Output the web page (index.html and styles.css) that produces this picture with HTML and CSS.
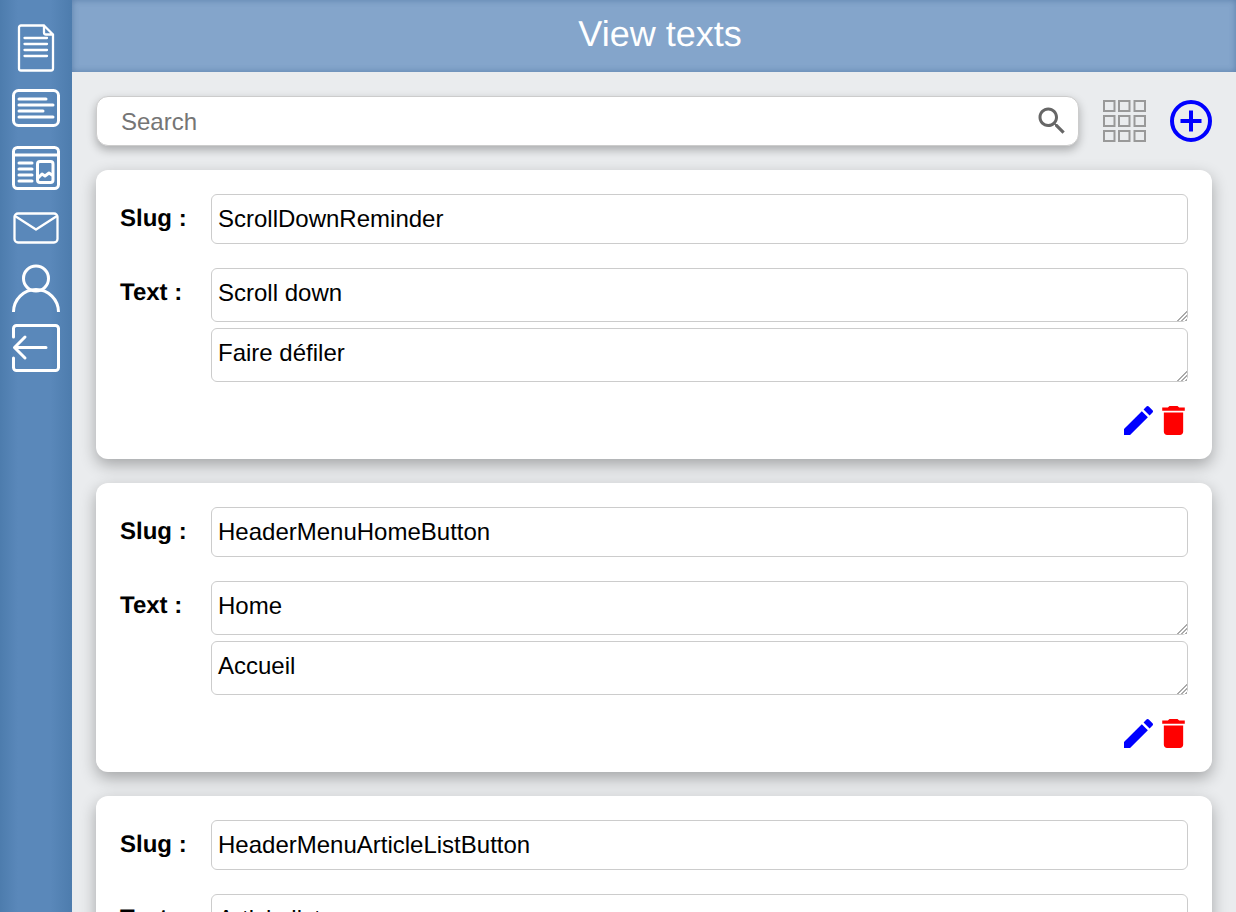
FILE: index.html
```html
<!DOCTYPE html>
<html lang="en">
<head>
	<meta charset="UTF-8">
	<title>View texts</title>
	<link rel="stylesheet" href="styles.css">
</head>
<body>
	<nav class="sidebar">
		<svg class="nav-icon thin" viewBox="0 0 48 48"><path d="M9 1.5H32L41 10.5V44.5a2 2 0 0 1-2 2H9a2 2 0 0 1-2-2V3.5a2 2 0 0 1 2-2zM32 1.5V8.5a2 2 0 0 0 2 2H41M12.5 14H35M12.5 20H35M12.5 26H35M12.5 32H35"/></svg>
		<svg class="nav-icon" viewBox="0 0 48 48"><rect x="1.5" y="6.5" width="45" height="35" rx="5"/><path d="M7 15H34M7 21H41M7 27H31M7 33H41"/></svg>
		<svg class="nav-icon" viewBox="0 0 48 48"><rect x="1.5" y="3.5" width="45" height="41" rx="4"/><path d="M1.5 11H46.5M7 19H20M7 25H20M7 31H20M7 37H20"/><rect x="25.5" y="17.5" width="15.5" height="21" rx="2.5"/><path d="M26 34L30 30L33 32L37 29L40 31"/></svg>
		<svg class="nav-icon thin" viewBox="0 0 48 48"><rect x="2.5" y="9.5" width="43" height="29" rx="3.5"/><path d="M3 12L24 25.5L45 12"/></svg>
		<svg class="nav-icon" viewBox="0 0 48 48"><circle cx="24" cy="14.5" r="12.5"/><path d="M1.5 48A22.5 22.5 0 0 1 46.5 48"/></svg>
		<svg class="nav-icon" viewBox="0 0 48 48"><path d="M1.5 13V4.5a3 3 0 0 1 3-3H43.5a3 3 0 0 1 3 3V43.5a3 3 0 0 1-3 3H4.5a3 3 0 0 1-3-3V34M2.5 23.5H34M13 13L2.5 23.5L13 34"/></svg>
	</nav>
	<div class="page">
		<header class="top-bar">
			<h1>View texts</h1>
		</header>
		<main class="content">
			<div class="toolbar">
				<div class="search">
					<input class="search-input" type="text" placeholder="Search">
					<svg class="search-icon" viewBox="0 0 24 24"><path d="M15.5 14h-.79l-.28-.27C15.41 12.59 16 11.11 16 9.5 16 5.91 13.09 3 9.5 3S3 5.91 3 9.5 5.91 16 9.5 16c1.61 0 3.09-.59 4.23-1.57l.27.28v.79l5 4.99L20.49 19l-4.99-5zm-6 0C7.01 14 5 11.99 5 9.5S7.01 5 9.5 5 14 7.01 14 9.5 11.99 14 9.5 14z"/></svg>
				</div>
				<svg class="grid-icon" viewBox="0 0 43 42">
					<rect x="1" y="1" width="10.5" height="10"/><rect x="16" y="1" width="10.5" height="10"/><rect x="31.5" y="1" width="10.5" height="10"/>
					<rect x="1" y="16" width="10.5" height="10"/><rect x="16" y="16" width="10.5" height="10"/><rect x="31.5" y="16" width="10.5" height="10"/>
					<rect x="1" y="31" width="10.5" height="10"/><rect x="16" y="31" width="10.5" height="10"/><rect x="31.5" y="31" width="10.5" height="10"/>
				</svg>
				<svg class="add-icon" viewBox="0 0 42 42"><circle cx="21" cy="21" r="19"/><path d="M10.5 21H31.5M21 10.5V31.5"/></svg>
			</div>

			<section class="card">
				<div class="row">
					<label class="label">Slug :</label>
					<div class="fields"><input class="field" type="text" value="ScrollDownReminder"></div>
				</div>
				<div class="row">
					<label class="label">Text :</label>
					<div class="fields">
						<textarea class="field area">Scroll down</textarea>
						<textarea class="field area">Faire défiler</textarea>
					</div>
				</div>
				<div class="actions">
					<svg class="edit-icon" viewBox="3 3 18 18"><path d="M3 17.25V21h3.75L17.81 9.94l-3.75-3.75L3 17.25zM20.71 7.04c.39-.39.39-1.02 0-1.41l-2.34-2.34c-.39-.39-1.02-.39-1.41 0l-1.83 1.83 3.75 3.75 1.83-1.83z"/></svg>
					<svg class="delete-icon" viewBox="5 3 14 18"><path d="M6 19c0 1.1.9 2 2 2h8c1.1 0 2-.9 2-2V7H6v12zM19 4h-3.5l-1-1h-5l-1 1H5v2h14V4z"/></svg>
				</div>
			</section>

			<section class="card">
				<div class="row">
					<label class="label">Slug :</label>
					<div class="fields"><input class="field" type="text" value="HeaderMenuHomeButton"></div>
				</div>
				<div class="row">
					<label class="label">Text :</label>
					<div class="fields">
						<textarea class="field area">Home</textarea>
						<textarea class="field area">Accueil</textarea>
					</div>
				</div>
				<div class="actions">
					<svg class="edit-icon" viewBox="3 3 18 18"><path d="M3 17.25V21h3.75L17.81 9.94l-3.75-3.75L3 17.25zM20.71 7.04c.39-.39.39-1.02 0-1.41l-2.34-2.34c-.39-.39-1.02-.39-1.41 0l-1.83 1.83 3.75 3.75 1.83-1.83z"/></svg>
					<svg class="delete-icon" viewBox="5 3 14 18"><path d="M6 19c0 1.1.9 2 2 2h8c1.1 0 2-.9 2-2V7H6v12zM19 4h-3.5l-1-1h-5l-1 1H5v2h14V4z"/></svg>
				</div>
			</section>

			<section class="card">
				<div class="row">
					<label class="label">Slug :</label>
					<div class="fields"><input class="field" type="text" value="HeaderMenuArticleListButton"></div>
				</div>
				<div class="row">
					<label class="label">Text :</label>
					<div class="fields">
						<textarea class="field area">Article list</textarea>
						<textarea class="field area">Liste des articles</textarea>
					</div>
				</div>
			</section>
		</main>
	</div>
</body>
</html>
```

FILE: styles.css
```css
html, body{
	height: 100%;
	margin: 0;
	overflow: hidden;
}
body{
	display: flex;
	background-color: #eaecee;
	font-family: "Liberation Sans", Arial, sans-serif;
	font-size: 24px;
	color: #000;
	text-rendering: geometricPrecision;
}
.sidebar{
	flex: none;
	width: 72px;
	box-sizing: border-box;
	padding-top: 24px;
	display: flex;
	flex-direction: column;
	align-items: center;
	gap: 12px;
	background: linear-gradient(to right, #4d7cad, #5a88ba 25%, #5a88ba 70%, #4d7cad);
}
.nav-icon{
	width: 48px;
	height: 48px;
	fill: none;
	stroke: #fff;
	stroke-width: 3;
	stroke-linecap: round;
	stroke-linejoin: round;
}
.nav-icon.thin{
	stroke-width: 2.3;
}
.page{
	flex: 1;
	min-width: 0;
	display: flex;
	flex-direction: column;
}
.top-bar{
	flex: none;
	height: 72px;
	padding-left: 12px;
	display: flex;
	align-items: center;
	justify-content: center;
	background-color: #84a5cb;
	box-shadow: inset 0 0 6px rgba(40, 80, 130, .45);
}
.top-bar h1{
	margin: 0 0 4px;
	font-size: 36px;
	font-weight: normal;
	color: #fff;
}
.content{
	flex: 1;
	padding: 24px 24px 0;
	display: flex;
	flex-direction: column;
	gap: 24px;
}
.toolbar{
	display: flex;
	align-items: center;
	gap: 24px;
	height: 50px;
}
.search{
	flex: 1;
	position: relative;
	height: 50px;
}
.search-input{
	width: 100%;
	height: 50px;
	box-sizing: border-box;
	padding: 2px 24px 0;
	border: 1px solid #ccc;
	border-radius: 12px;
	background-color: #fff;
	box-shadow: 0 4px 10px rgba(0, 0, 0, .28);
	font: inherit;
}
.search-icon{
	position: absolute;
	top: 7px;
	right: 9px;
	width: 36px;
	height: 36px;
	fill: #666;
}
.grid-icon{
	flex: none;
	width: 43px;
	height: 42px;
	fill: none;
	stroke: #999;
	stroke-width: 2;
}
.add-icon{
	flex: none;
	width: 42px;
	height: 42px;
	fill: none;
	stroke: #00f;
	stroke-width: 4;
}
.card{
	flex: none;
	padding: 24px;
	display: flex;
	flex-direction: column;
	gap: 24px;
	border-radius: 12px;
	background-color: #fff;
	box-shadow: 0 6px 16px rgba(0, 0, 0, .3);
}
.row{
	display: flex;
}
.label{
	flex: none;
	width: 91px;
	padding-top: 11px;
	font-weight: bold;
}
.fields{
	flex: 1;
	display: flex;
	flex-direction: column;
	gap: 6px;
}
.field{
	display: block;
	width: 100%;
	height: 50px;
	box-sizing: border-box;
	padding: 0 6px;
	border: 1px solid #ccc;
	border-radius: 6px;
	background-color: #fff;
	color: #000;
	font: inherit;
}
.area{
	height: 54px;
	padding: 10px 6px;
}
.area::-webkit-resizer{
	background:
		linear-gradient(135deg, #fff 58%, transparent 58%),
		repeating-linear-gradient(135deg, #aaa 0 1px, #fff 1px 2.8px);
}
.actions{
	display: flex;
	justify-content: flex-end;
	align-items: center;
	gap: 9px;
	height: 29px;
	padding-right: 3px;
}
.edit-icon{
	width: 29px;
	height: 29px;
	fill: #00f;
}
.delete-icon{
	width: 23px;
	height: 29px;
	fill: #f00;
}
```
